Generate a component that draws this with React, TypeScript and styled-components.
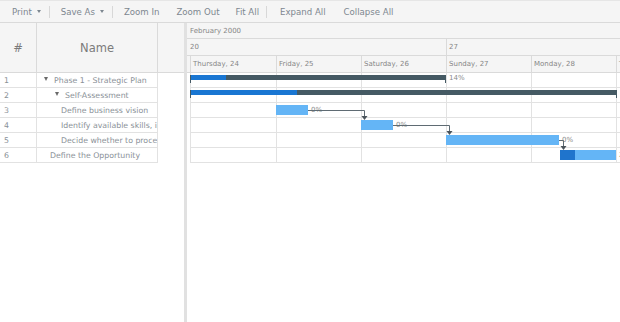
import styled, { createGlobalStyle } from "styled-components";

const GlobalStyle = createGlobalStyle`
  html, body {
    margin: 0;
    padding: 0;
    background: #fff;
  }
  body {
    font-family: "DejaVu Sans", Verdana, sans-serif;
  }
`;

const Frame = styled.div`
  width: 620px;
  height: 322px;
  display: flex;
  flex-direction: column;
  overflow: hidden;
  background: #fff;
`;

const Toolbar = styled.div`
  height: 23px;
  box-sizing: border-box;
  flex: none;
  display: flex;
  align-items: center;
  padding-left: 4px;
  background: #f5f5f5;
  border-top: 1px solid #e6e6e6;
  border-bottom: 1px solid #dadada;
`;

const ToolButton = styled.div<{ $pad: number }>`
  display: flex;
  align-items: center;
  padding: 0 ${({ $pad }) => $pad}px;
  font-size: 8.6px;
  color: #7d8790;
  white-space: nowrap;
`;

const Caret = styled.span`
  width: 0;
  height: 0;
  margin-left: 5px;
  border-left: 2.5px solid transparent;
  border-right: 2.5px solid transparent;
  border-top: 3px solid #7d8790;
`;

const Separator = styled.div<{ $right: number }>`
  width: 1px;
  height: 12px;
  background: #d8d8d8;
  margin-right: ${({ $right }) => $right}px;
`;

const Main = styled.div`
  flex: 1;
  display: flex;
  min-height: 0;
`;

const Left = styled.div`
  width: 184px;
  flex: none;
  display: flex;
  flex-direction: column;
`;

const Splitter = styled.div`
  width: 3px;
  flex: none;
  background: #e1e1e1;
`;

const GridHeader = styled.div`
  height: 50px;
  box-sizing: border-box;
  display: flex;
  background: #f5f5f5;
  border-bottom: 1px solid #dadada;
`;

const HeadCell = styled.div<{ $w: number }>`
  width: ${({ $w }) => $w}px;
  box-sizing: border-box;
  border-right: 1px solid #dadada;
  display: flex;
  align-items: center;
  justify-content: center;
  font-size: 11.5px;
  color: #7b7b7b;
`;

const GridRow = styled.div`
  width: 158px;
  height: 15px;
  box-sizing: border-box;
  display: flex;
  border-bottom: 1px solid #e2e2e2;
  font-size: 7.8px;
  color: #8a9197;
`;

const NumCell = styled.div`
  width: 37px;
  box-sizing: border-box;
  border-right: 1px solid #e2e2e2;
  padding-left: 4px;
  display: flex;
  align-items: center;
`;

const NameCell = styled.div<{ $indent: number }>`
  width: 121px;
  box-sizing: border-box;
  border-right: 1px solid #e2e2e2;
  padding-left: ${({ $indent }) => $indent}px;
  display: flex;
  align-items: center;
  overflow: hidden;
  white-space: nowrap;
`;

const Toggle = styled.span`
  flex: none;
  width: 0;
  height: 0;
  margin-right: 6px;
  margin-top: -2px;
  border-left: 2px solid transparent;
  border-right: 2px solid transparent;
  border-top: 4px solid #6a6a6a;
`;

const Timeline = styled.div`
  flex: 1;
  min-width: 0;
  display: flex;
  flex-direction: column;
  overflow: hidden;
`;

const ScaleRow = styled.div<{ $h: number; $inset?: boolean }>`
  height: ${({ $h }) => $h}px;
  box-sizing: border-box;
  flex: none;
  display: flex;
  padding-left: ${({ $inset }) => ($inset ? 3 : 0)}px;
  background: #f5f5f5;
  border-bottom: 1px solid #dadada;
  font-size: 7px;
  color: #868686;
  white-space: nowrap;
`;

const ScaleCell = styled.div<{ $w: number; $pad: number; $line?: boolean }>`
  width: ${({ $w }) => $w}px;
  flex: none;
  box-sizing: border-box;
  padding-left: ${({ $pad }) => $pad}px;
  border-left: ${({ $line }) => ($line ? "1px solid #dadada" : "none")};
  display: flex;
  align-items: center;
  overflow: hidden;
`;

const Body = styled.div`
  position: relative;
  padding-left: 3px;
`;

const Track = styled.div`
  position: relative;
  height: 15px;
  box-sizing: border-box;
  display: flex;
  border-bottom: 1px solid #e2e2e2;
`;

const DayCell = styled.div<{ $w: number }>`
  width: ${({ $w }) => $w}px;
  flex: none;
  box-sizing: border-box;
  border-left: 1px solid #e2e2e2;
`;

const Bar = styled.div<{ $kind: "parent" | "task" }>`
  position: absolute;
  top: 2px;
  height: ${({ $kind }) => ($kind === "parent" ? 5 : 10)}px;
  background: ${({ $kind }) => ($kind === "parent" ? "#455a64" : "#64b5f6")};
  overflow: visible;
`;

const Progress = styled.div<{ $kind: "parent" | "task" }>`
  height: 100%;
  background: ${({ $kind }) => ($kind === "parent" ? "#1976d2" : "#1f74cc")};
`;

const Tick = styled.div<{ $side: "left" | "right" }>`
  position: absolute;
  ${({ $side }) => $side}: 0;
  top: 0;
  width: 1px;
  height: 8px;
  background: #455a64;
`;

const BarLabel = styled.div`
  position: absolute;
  line-height: 10px;
  font-size: 7px;
  color: #8a8a8a;
  white-space: nowrap;
`;

const Links = styled.svg`
  position: absolute;
  left: 3px;
  top: 0;
  overflow: visible;
  pointer-events: none;
`;

type Task = {
  num: number;
  name: string;
  indent: number;
  parent: boolean;
  start: number;
  end: number;
  progress: number;
};

const tasks: Task[] = [
  { num: 1, name: "Phase 1 - Strategic Plan", indent: 7, parent: true, start: 0, end: 256, progress: 14 },
  { num: 2, name: "Self-Assessment", indent: 18, parent: true, start: 0, end: 427, progress: 25 },
  { num: 3, name: "Define business vision", indent: 24, parent: false, start: 86, end: 118, progress: 0 },
  { num: 4, name: "Identify available skills, information and support", indent: 24, parent: false, start: 171, end: 203, progress: 0 },
  { num: 5, name: "Decide whether to proceed", indent: 24, parent: false, start: 256, end: 369, progress: 0 },
  { num: 6, name: "Define the Opportunity", indent: 13, parent: false, start: 370, end: 426, progress: 27 },
];

const days = [
  { label: "Thursday, 24", w: 86 },
  { label: "Friday, 25", w: 85 },
  { label: "Saturday, 26", w: 85 },
  { label: "Sunday, 27", w: 85 },
  { label: "Monday, 28", w: 85 },
  { label: "Tuesday, 29", w: 86 },
];

// finish-to-start links, in pixels from the first day line
const links = [
  { x1: 118, y: 37, x2: 174, y2: 47 },
  { x1: 203, y: 52, x2: 259, y2: 62 },
  { x1: 369, y: 67, x2: 373, y2: 77 },
];

export default function App() {
  return (
    <>
      <GlobalStyle />
      <Frame>
        <Toolbar>
          <ToolButton $pad={8}>
            Print
            <Caret />
          </ToolButton>
          <Separator $right={3} />
          <ToolButton $pad={8}>
            Save As
            <Caret />
          </ToolButton>
          <Separator $right={3} />
          <ToolButton $pad={8}>Zoom In</ToolButton>
          <ToolButton $pad={9}>Zoom Out</ToolButton>
          <ToolButton $pad={7}>Fit All</ToolButton>
          <Separator $right={5} />
          <ToolButton $pad={8}>Expand All</ToolButton>
          <ToolButton $pad={10}>Collapse All</ToolButton>
        </Toolbar>
        <Main>
          <Left>
            <GridHeader>
              <HeadCell $w={37}>#</HeadCell>
              <HeadCell $w={121}>Name</HeadCell>
            </GridHeader>
            {tasks.map((t) => (
              <GridRow key={t.num}>
                <NumCell>{t.num}</NumCell>
                <NameCell $indent={t.indent}>
                  {t.parent && <Toggle />}
                  {t.name}
                </NameCell>
              </GridRow>
            ))}
          </Left>
          <Splitter />
          <Timeline>
            <ScaleRow $h={16}>
              <ScaleCell $w={433} $pad={3}>February 2000</ScaleCell>
            </ScaleRow>
            <ScaleRow $h={17}>
              <ScaleCell $w={259} $pad={3}>20</ScaleCell>
              <ScaleCell $w={260} $pad={2} $line>27</ScaleCell>
            </ScaleRow>
            <ScaleRow $h={17} $inset>
              {days.map((d) => (
                <ScaleCell key={d.label} $w={d.w} $pad={2} $line>
                  {d.label}
                </ScaleCell>
              ))}
            </ScaleRow>
            <Body>
              {tasks.map((t) => {
                const kind = t.parent ? "parent" : "task";
                const barH = t.parent ? 5 : 10;
                return (
                  <Track key={t.num}>
                    {days.map((d) => (
                      <DayCell key={d.label} $w={d.w} />
                    ))}
                    <Bar $kind={kind} style={{ left: t.start, width: t.end - t.start }}>
                      <Progress $kind={kind} style={{ width: `${t.progress}%` }} />
                      {t.parent && <Tick $side="left" />}
                      {t.parent && <Tick $side="right" />}
                    </Bar>
                    <BarLabel style={{ left: t.end + 3, top: 2 + barH / 2 - 5 }}>
                      {t.progress}%
                    </BarLabel>
                  </Track>
                );
              })}
              <Links width={430} height={90}>
                {links.map((l, i) => (
                  <g key={i}>
                    <path
                      d={`M${l.x1} ${l.y + 0.5} H${l.x2 + 0.5} V${l.y2 - 3}`}
                      fill="none"
                      stroke="#5f6b73"
                      strokeWidth={1}
                    />
                    <polygon
                      points={`${l.x2 - 2.5},${l.y2 - 4} ${l.x2 + 3.5},${l.y2 - 4} ${l.x2 + 0.5},${l.y2}`}
                      fill="#4a545b"
                    />
                  </g>
                ))}
              </Links>
            </Body>
          </Timeline>
        </Main>
      </Frame>
    </>
  );
}
